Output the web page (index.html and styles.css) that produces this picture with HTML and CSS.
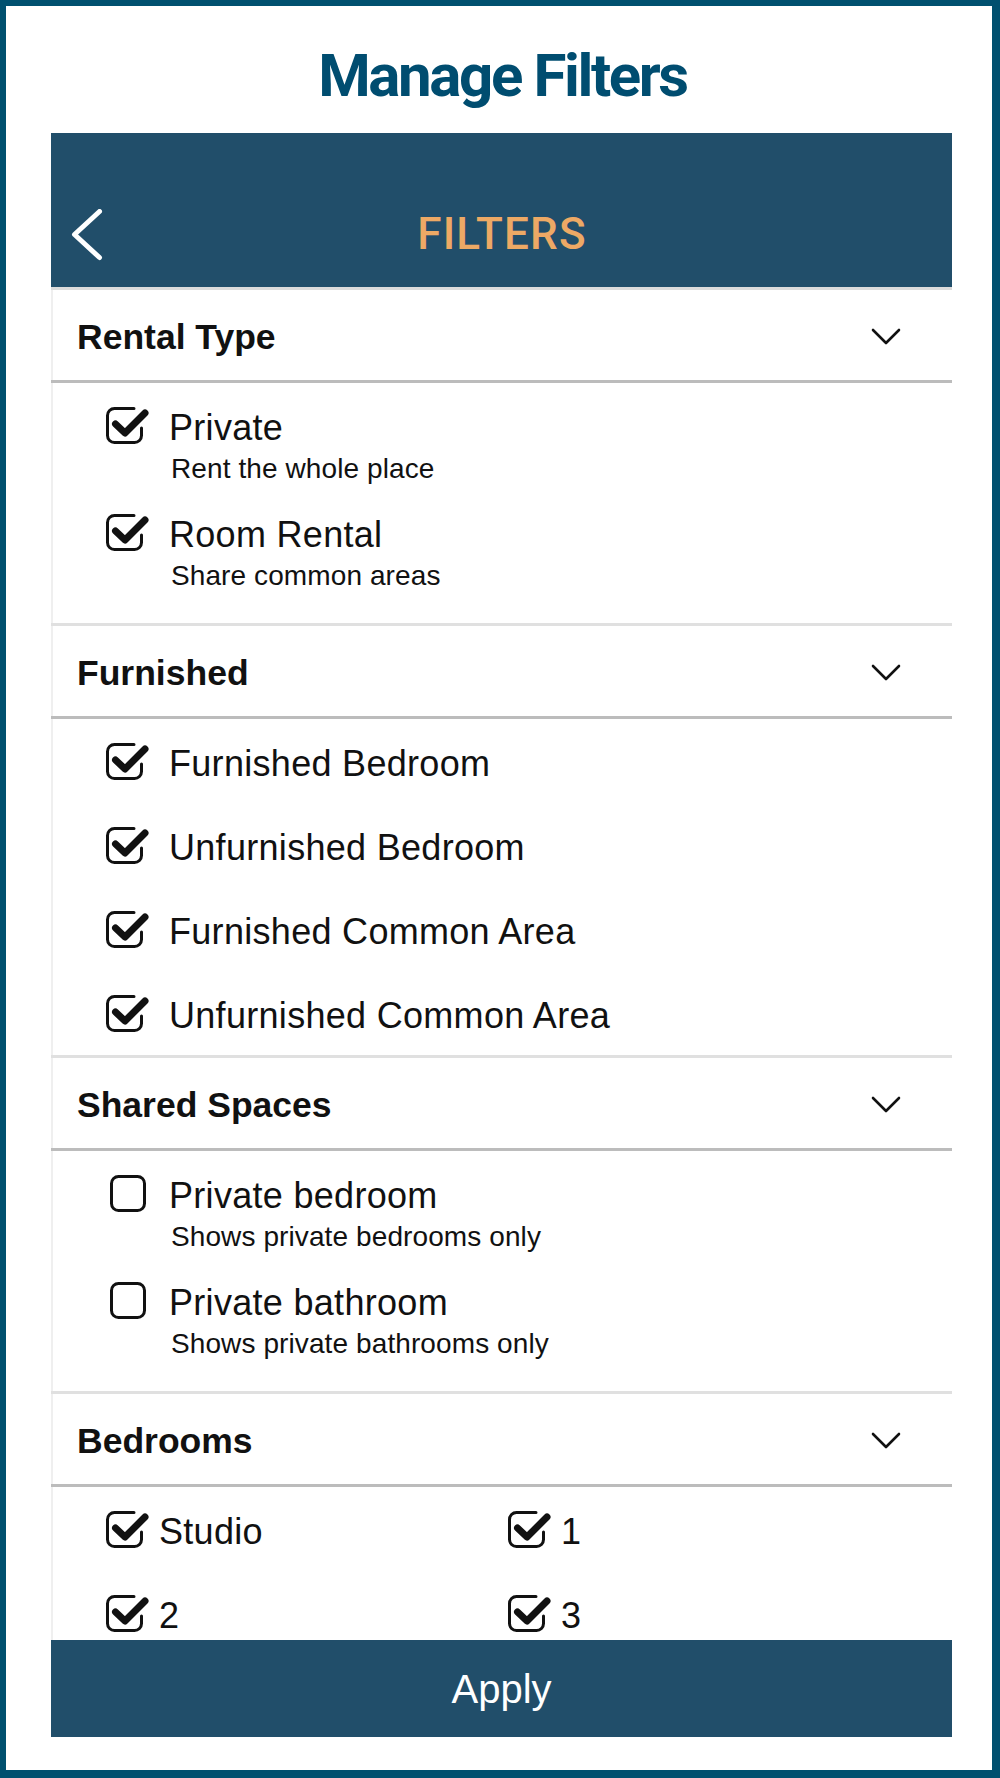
FILE: index.html
```html
<!DOCTYPE html>
<html lang="en">
<head>
<meta charset="utf-8">
<title>Manage Filters</title>
<link rel="stylesheet" href="styles.css">
</head>
<body>
<svg class="defs" width="0" height="0" aria-hidden="true">
  <defs>
    <symbol id="chk-on" viewBox="0 0 44 38">
      <path d="M28 1.5 H8.5 A7 7 0 0 0 1.5 8.5 V28.5 A7 7 0 0 0 8.5 35.5 H28.5 A7 7 0 0 0 35.5 28.5 V21" fill="none" stroke="#111" stroke-width="3" stroke-linecap="round"/>
      <path d="M9.5 17 L19 26 L39 6" fill="none" stroke="#111" stroke-width="7" stroke-linecap="round" stroke-linejoin="round"/>
    </symbol>
    <symbol id="chk-off" viewBox="0 0 44 38">
      <rect x="5.5" y="1.5" width="33" height="34" rx="7" ry="7" fill="none" stroke="#111" stroke-width="3"/>
    </symbol>
    <symbol id="chev" viewBox="0 0 30 17">
      <path d="M2 2 L15 15 L28 2" fill="none" stroke="#111" stroke-width="2.6" stroke-linecap="round" stroke-linejoin="round"/>
    </symbol>
  </defs>
</svg>

<div class="frame">
  <h1 class="page-title">Manage Filters</h1>

  <div class="phone">
    <header class="nav">
      <span class="back">
        <svg width="32" height="52" viewBox="0 0 32 52"><path d="M28.5 2.5 L3.5 25.5 L28.5 48.5" fill="none" stroke="#fff" stroke-width="5" stroke-linecap="round" stroke-linejoin="round"/></svg>
      </span>
      <span class="nav-title">FILTERS</span>
      <span></span>
    </header>

    <div class="scroll">
      <section class="group">
        <div class="group-head"><span>Rental Type</span><svg class="chev"><use href="#chev"/></svg></div>
        <div class="opts">
          <div class="opt">
            <svg class="box"><use href="#chk-on"/></svg>
            <div class="opt-text"><div class="opt-label">Private</div><div class="opt-sub">Rent the whole place</div></div>
          </div>
          <div class="opt">
            <svg class="box"><use href="#chk-on"/></svg>
            <div class="opt-text"><div class="opt-label">Room Rental</div><div class="opt-sub">Share common areas</div></div>
          </div>
        </div>
      </section>

      <section class="group">
        <div class="group-head"><span>Furnished</span><svg class="chev"><use href="#chev"/></svg></div>
        <div class="opts opts-plain">
          <div class="opt"><svg class="box"><use href="#chk-on"/></svg><div class="opt-text"><div class="opt-label">Furnished Bedroom</div></div></div>
          <div class="opt"><svg class="box"><use href="#chk-on"/></svg><div class="opt-text"><div class="opt-label">Unfurnished Bedroom</div></div></div>
          <div class="opt"><svg class="box"><use href="#chk-on"/></svg><div class="opt-text"><div class="opt-label">Furnished Common Area</div></div></div>
          <div class="opt"><svg class="box"><use href="#chk-on"/></svg><div class="opt-text"><div class="opt-label">Unfurnished Common Area</div></div></div>
        </div>
      </section>

      <section class="group">
        <div class="group-head"><span>Shared Spaces</span><svg class="chev"><use href="#chev"/></svg></div>
        <div class="opts">
          <div class="opt">
            <svg class="box"><use href="#chk-off"/></svg>
            <div class="opt-text"><div class="opt-label">Private bedroom</div><div class="opt-sub">Shows private bedrooms only</div></div>
          </div>
          <div class="opt">
            <svg class="box"><use href="#chk-off"/></svg>
            <div class="opt-text"><div class="opt-label">Private bathroom</div><div class="opt-sub">Shows private bathrooms only</div></div>
          </div>
        </div>
      </section>

      <section class="group">
        <div class="group-head"><span>Bedrooms</span><svg class="chev"><use href="#chev"/></svg></div>
        <div class="grid-opts">
          <div class="opt opt-tight"><svg class="box"><use href="#chk-on"/></svg><div class="opt-text"><div class="opt-label">Studio</div></div></div>
          <div class="opt opt-tight"><svg class="box"><use href="#chk-on"/></svg><div class="opt-text"><div class="opt-label">1</div></div></div>
          <div class="opt opt-tight"><svg class="box"><use href="#chk-on"/></svg><div class="opt-text"><div class="opt-label">2</div></div></div>
          <div class="opt opt-tight"><svg class="box"><use href="#chk-on"/></svg><div class="opt-text"><div class="opt-label">3</div></div></div>
        </div>
      </section>
    </div>

    <div class="apply">Apply</div>
  </div>
</div>
</body>
</html>
```

FILE: styles.css
```css
html, body {
  margin: 0;
  padding: 0;
  background: #ffffff;
}

.defs {
  position: absolute;
  width: 0;
  height: 0;
  overflow: hidden;
}

.frame {
  width: 1000px;
  height: 1778px;
  box-sizing: border-box;
  border-style: solid;
  border-color: #00506f;
  border-width: 6px 8px 8px 6px;
  background: #ffffff;
  font-family: "Liberation Sans", Arial, sans-serif;
  color: #111;
}

.page-title {
  margin: 0;
  height: 127px;
  box-sizing: border-box;
  padding: 35px 0 0 7px;
  text-align: center;
  font-family: Roboto, "Liberation Sans", sans-serif;
  font-weight: 700;
  font-size: 60px;
  line-height: 70px;
  letter-spacing: -2.4px;
  color: #004d70;
}

.phone {
  margin-left: 45px;
  width: 901px;
  height: 1604px;
  display: flex;
  flex-direction: column;
}

.nav {
  flex: none;
  height: 157px;
  box-sizing: border-box;
  background: #214e6a;
  border-bottom: 3px solid #dcdcdc;
  display: grid;
  grid-template-columns: 1fr auto 1fr;
  align-items: start;
  padding-top: 76px;
}

.back {
  margin-left: 20px;
  display: block;
  height: 52px;
}

.back svg {
  display: block;
}

.nav-title {
  font-family: Roboto, "Liberation Sans", sans-serif;
  font-weight: 500;
  font-size: 44px;
  line-height: 50px;
  letter-spacing: 1.2px;
  padding-left: 1px;
  color: #eda965;
}

.scroll {
  flex: 1;
  overflow: hidden;
  box-shadow: inset 2px 0 0 #efefef;
}

.group + .group {
  border-top: 3px solid #e0e0e0;
}

.group-head {
  height: 93px;
  box-sizing: border-box;
  padding: 3px 51px 0 26px;
  border-bottom: 3px solid #bcbcbc;
  display: flex;
  align-items: center;
  justify-content: space-between;
  font-weight: 700;
  font-size: 35.5px;
  line-height: 40px;
  color: #111;
}

.chev {
  width: 30px;
  height: 17px;
  flex: none;
}

.opts {
  display: flex;
  flex-direction: column;
  gap: 29px;
  padding: 24px 0 31px 55px;
}

.opts-plain {
  gap: 43px;
  padding-bottom: 19px;
}

.opt {
  display: flex;
  align-items: flex-start;
}

.box {
  width: 44px;
  height: 38px;
  flex: none;
  margin-right: 19px;
}

.opt-text {
  padding-top: 1px;
}

.opt-label {
  font-size: 36px;
  line-height: 40px;
  letter-spacing: 0.3px;
  color: #111;
}

.opt-sub {
  margin-top: 5px;
  margin-left: 2px;
  font-size: 28px;
  line-height: 32px;
  letter-spacing: 0.1px;
  color: #111;
}

.grid-opts {
  display: grid;
  grid-template-columns: 402px 1fr;
  row-gap: 43px;
  padding: 24px 0 0 55px;
}

.opt-tight .box {
  margin-right: 9px;
}

.apply {
  flex: none;
  height: 97px;
  background: #214e6a;
  color: #ffffff;
  display: flex;
  align-items: center;
  justify-content: center;
  font-size: 40px;
  line-height: 46px;
}
```
